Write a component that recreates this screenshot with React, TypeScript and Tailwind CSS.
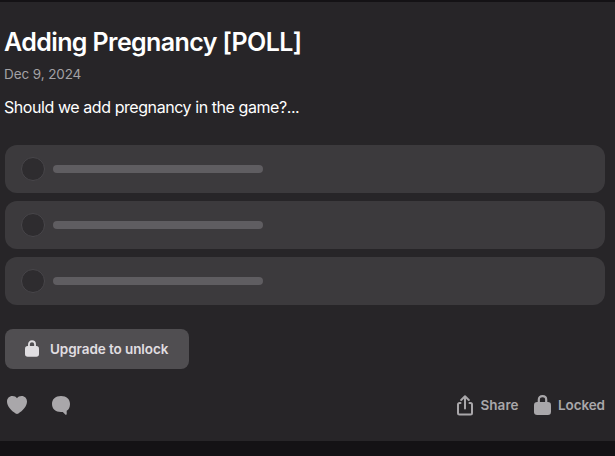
const HeartIcon = () => (
  <svg width="20" height="18" viewBox="0 0 20 18" fill="currentColor">
    <path d="M10 2.300C11 .9 12.500 0 14.600 0 17.800 0 20 2.400 20 5.600c0 5-4.400 9.300-8.600 11.900-.9.6-1.900.6-2.800 0C4.400 14.900 0 10.600 0 5.600 0 2.400 2.200 0 5.400 0 7.500 0 9 .9 10 2.300Z" />
  </svg>
);

const CommentIcon = () => (
  <svg width="18" height="19" viewBox="0 0 18 19" fill="currentColor">
    <path d="M9 0c5.600 0 9 3.100 9 8 0 3.200-1.200 5.600-3.300 6.800v3.300c0 .8-.8 1.100-1.400.5L10.800 16H9c-5.600 0-9-3.100-9-8s3.400-8 9-8Z" />
  </svg>
);

const ShareIcon = () => (
  <svg
    width="16"
    height="21"
    viewBox="0 0 16 21"
    fill="none"
    stroke="currentColor"
    strokeWidth="2"
    strokeLinecap="round"
    strokeLinejoin="round"
  >
    <path d="M3.500 8H2.500C1.600 8 1 8.600 1 9.500v8.500c0 .9.6 1.500 1.500 1.500h11c.9 0 1.500-.6 1.500-1.500V9.500C15 8.600 14.400 8 13.500 8h-1" />
    <path d="M8 13.500V1.500M4.200 5 8 1.300 11.800 5" />
  </svg>
);

const LockIcon = ({ className }: { className: string }) => (
  <svg className={className} viewBox="0 0 17 20" fill="none">
    <path d="M4.800 8V4.700C4.800 2.600 6.300 1.200 8.500 1.200s3.700 1.400 3.700 3.500V8" stroke="currentColor" strokeWidth="2.200" />
    <rect y="7" width="17" height="13" rx="3.200" fill="currentColor" />
  </svg>
);

const options = [1, 2, 3];

const App = () => {
  return (
    <div className="h-[456px] bg-[#141215] pt-0.5 font-['Inter',sans-serif]">
      <article className="h-[439px] bg-[#272528] pl-[5px] pr-2.5 pt-6 text-white">
        <h1 className="-ml-px h-8 whitespace-nowrap text-[25px] font-semibold leading-8 tracking-[-0.6px]">
          Adding Pregnancy [POLL]
        </h1>
        <p className="-ml-px mt-1.5 h-5 text-[13.5px] leading-5 tracking-[-0.1px] text-[#a3a1a5]">Dec 9, 2024</p>
        <p className="-ml-px mt-[11px] h-6 whitespace-nowrap text-base leading-6 tracking-[-0.43px]">
          Should we add pregnancy in the game?...
        </p>

        <ul className="mt-[26px] flex flex-col gap-2">
          {options.map((option) => (
            <li key={option} className="flex h-12 items-center gap-2 rounded-xl bg-[#3c3a3d] pl-4">
              <span className="size-6 rounded-full border border-[#48464a] bg-[#2e2c2f]" />
              <span className="h-2 w-[210px] rounded-full bg-[#5f5d61]" />
            </li>
          ))}
        </ul>

        <button className="mt-6 flex h-10 w-[184px] items-center rounded-lg bg-[#504e51] pl-5 text-[#e0dee1]">
          <LockIcon className="mb-0.5 h-[17px] w-[14px]" />
          <span className="ml-[11px] whitespace-nowrap text-[13.5px] font-semibold tracking-[-0.08px]">Upgrade to unlock</span>
        </button>

        <footer className="mt-6 flex h-6 items-center text-[#a9a7aa]">
          <button className="ml-0.5">
            <HeartIcon />
          </button>
          <button className="ml-[25px]">
            <CommentIcon />
          </button>
          <button className="ml-auto flex items-center gap-[7px] text-[13.5px] font-semibold">
            <ShareIcon />
            <span className="w-[39px]">Share</span>
          </button>
          <button className="ml-[15px] flex items-center gap-[7px] text-[13.5px] font-semibold">
            <LockIcon className="mb-px h-5 w-[17px]" />
            <span className="w-[47px] tracking-[-0.1px]">Locked</span>
          </button>
        </footer>
      </article>
    </div>
  );
};

export default App;
